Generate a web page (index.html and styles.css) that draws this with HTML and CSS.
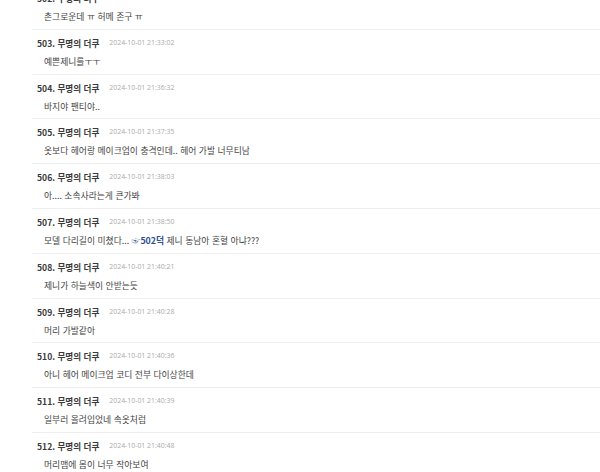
FILE: index.html
```html
<!DOCTYPE html>
<html lang="ko">
<head>
  <meta charset="UTF-8" />
  <meta name="viewport" content="width=device-width, initial-scale=1.0"/>
  <title>댓글</title>
  <link rel="stylesheet" href="styles.css">
</head>
<body>
<ul class="comment-list">
  <li class="comment">
    <div class="comment-head"><span class="nick">502. 무명의 더쿠</span><span class="date">2024-10-01 21:30:40</span></div>
    <div class="comment-body">촌그로운데 ㅠ 허메 존구 ㅠ</div>
  </li>
  <li class="comment">
    <div class="comment-head"><span class="nick">503. 무명의 더쿠</span><span class="date">2024-10-01 21:33:02</span></div>
    <div class="comment-body">예쁜제니를ㅜㅜ</div>
  </li>
  <li class="comment">
    <div class="comment-head"><span class="nick">504. 무명의 더쿠</span><span class="date">2024-10-01 21:36:32</span></div>
    <div class="comment-body">바지야 팬티야..</div>
  </li>
  <li class="comment">
    <div class="comment-head"><span class="nick">505. 무명의 더쿠</span><span class="date">2024-10-01 21:37:35</span></div>
    <div class="comment-body">옷보다 헤어랑 메이크업이 충격인데.. 헤어 가발 너무티남</div>
  </li>
  <li class="comment">
    <div class="comment-head"><span class="nick">506. 무명의 더쿠</span><span class="date">2024-10-01 21:38:03</span></div>
    <div class="comment-body">아.... 소속사라는게 큰가봐</div>
  </li>
  <li class="comment">
    <div class="comment-head"><span class="nick">507. 무명의 더쿠</span><span class="date">2024-10-01 21:38:50</span></div>
    <div class="comment-body">모델 다리길이 미쳤다... <a class="reply-link" href="#">☞502덕</a> 제니 동남아 혼혈 아냐???</div>
  </li>
  <li class="comment">
    <div class="comment-head"><span class="nick">508. 무명의 더쿠</span><span class="date">2024-10-01 21:40:21</span></div>
    <div class="comment-body">제니가 하늘색이 안받는듯</div>
  </li>
  <li class="comment">
    <div class="comment-head"><span class="nick">509. 무명의 더쿠</span><span class="date">2024-10-01 21:40:28</span></div>
    <div class="comment-body">머리 가발같아</div>
  </li>
  <li class="comment">
    <div class="comment-head"><span class="nick">510. 무명의 더쿠</span><span class="date">2024-10-01 21:40:36</span></div>
    <div class="comment-body">아니 헤어 메이크업 코디 전부 다이상한데</div>
  </li>
  <li class="comment">
    <div class="comment-head"><span class="nick">511. 무명의 더쿠</span><span class="date">2024-10-01 21:40:39</span></div>
    <div class="comment-body">일부러 올려입었네 속옷처럼</div>
  </li>
  <li class="comment">
    <div class="comment-head"><span class="nick">512. 무명의 더쿠</span><span class="date">2024-10-01 21:40:48</span></div>
    <div class="comment-body">머리맴에 몸이 너무 작아보여</div>
  </li>
</ul>
</body>
</html>
```

FILE: styles.css
```css
body {
  margin: 0;
  background-color: #fff;
  font-family: "Noto Sans CJK KR", "Noto Sans", sans-serif;
  color: #444;
  overflow: hidden;
}
.comment-list {
  list-style: none;
  margin: -15px 0 0 32px;
  padding: 0;
}
.comment {
  padding: 7px 0 5.8px 5px;
  border-bottom: 1px solid #eee;
}
.comment-head {
  display: flex;
  align-items: center;
  height: 12px;
  line-height: 12px;
}
.nick {
  font-size: 8.6px;
  font-weight: bold;
  color: #3a3a3a;
}
.date {
  margin-left: 10px;
  font-family: "Open Sans", "Noto Sans", sans-serif;
  font-size: 6.9px;
  color: #aaa;
}
.comment-body {
  margin-top: 7px;
  padding-left: 7px;
  height: 12px;
  line-height: 12px;
  font-size: 8.8px;
  color: #444;
}
.reply-link {
  color: #2e4d8c;
  font-weight: bold;
  text-decoration: none;
}
```
